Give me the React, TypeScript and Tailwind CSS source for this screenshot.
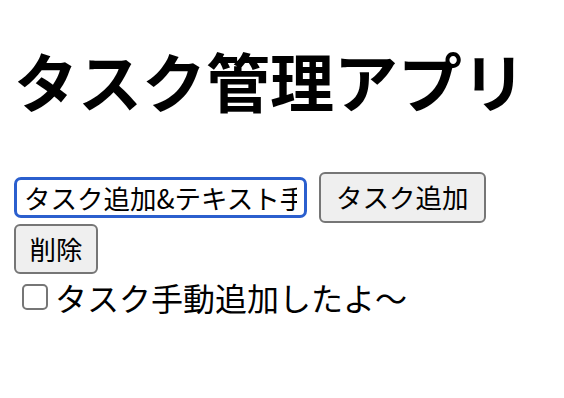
import { useState } from 'react';

const font = { fontFamily: '"Noto Sans CJK JP", "Noto Sans", sans-serif' };

export default function App() {
  const [text, setText] = useState('タスク追加&テキスト手動追加したよ〜');
  const [done, setDone] = useState(false);

  return (
    <div className="min-h-screen bg-white text-black pl-[14px] pr-4" style={font}>
      {/* Title */}
      <h1 className="text-[64px] font-bold leading-[92px] pt-[33px] pb-[47px]">
        タスク管理アプリ
      </h1>

      {/* Input + buttons */}
      <div className="flex items-center gap-[12px]">
        <input
          value={text}
          onChange={(e) => setText(e.target.value)}
          className="w-[293px] h-[41px] border-[3px] border-[#2b5fce] rounded-[7px] px-[7px] text-[26.5px] text-black outline-none bg-white"
          style={font}
        />
        <button className="h-[51px] px-[15px] border-2 border-[#767676] rounded-[6px] bg-[#efefef] text-[26.5px] leading-none">
          タスク追加
        </button>
      </div>
      <button className="mt-px h-[50px] w-[84px] border-2 border-[#767676] rounded-[6px] bg-[#efefef] text-[26.5px] leading-none">
        削除
      </button>

      {/* Task list */}
      <div className="flex items-center gap-[7px] pl-[8px] mt-[4px]">
        <button
          onClick={() => setDone(!done)}
          className={`w-[26px] h-[26px] border-2 border-[#767676] rounded-[5px] ${done ? 'bg-[#2b5fce]' : 'bg-white'}`}
        />
        <span className="text-[32px] leading-[38px]">タスク手動追加したよ〜</span>
      </div>
    </div>
  );
}
